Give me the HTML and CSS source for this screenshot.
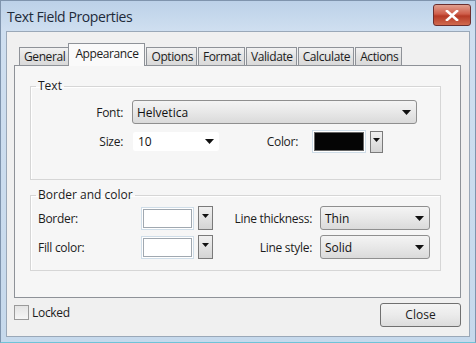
FILE: index.html
```html
<html>
    <head>
        <link rel="stylesheet" href="styles.css">
    </head>
    <body>
        <div class="window">
            <div class="titlebar">
                <span class="title">Text Field Properties</span>
                <div class="close-x">
                    <svg width="14" height="11" viewBox="0 0 14 11"><path d="M2 1 L12 10 M12 1 L2 10" stroke="#fff" stroke-width="2.6" stroke-linecap="square"/></svg>
                </div>
            </div>
            <div class="dialog">
                <div class="tabs">
                    <div class="tab">General</div>
                    <div class="tab selected">Appearance</div>
                    <div class="tab">Options</div>
                    <div class="tab">Format</div>
                    <div class="tab">Validate</div>
                    <div class="tab">Calculate</div>
                    <div class="tab">Actions</div>
                </div>
                <div class="panel">
                    <fieldset class="group group-text">
                        <legend>Text</legend>
                        <div class="row row-font">
                            <span class="label right w92">Font:</span>
                            <div class="select wide">Helvetica<svg class="arrow" width="9" height="5" viewBox="0 0 9 5"><path d="M0 0 H9 L4.5 5 Z" fill="#111"/></svg></div>
                        </div>
                        <div class="row row-size">
                            <span class="label right w92">Size:</span>
                            <div class="select flat size">10<svg class="arrow" width="9" height="5" viewBox="0 0 9 5"><path d="M0 0 H9 L4.5 5 Z" fill="#111"/></svg></div>
                            <span class="label right w78">Color:</span>
                            <div class="swatch black"><div class="fill"></div></div>
                            <div class="drop-btn small"><svg width="7" height="4" viewBox="0 0 7 4"><path d="M0 0 H7 L3.5 4 Z" fill="#111"/></svg></div>
                        </div>
                    </fieldset>
                    <fieldset class="group group-border">
                        <legend>Border and color</legend>
                        <div class="row">
                            <span class="label w110">Border:</span>
                            <div class="swatch"><div class="fill"></div></div>
                            <div class="drop-btn"><svg width="7" height="4" viewBox="0 0 7 4"><path d="M0 0 H7 L3.5 4 Z" fill="#111"/></svg></div>
                            <span class="label right w99">Line thickness:</span>
                            <div class="select line">Thin<svg class="arrow" width="9" height="5" viewBox="0 0 9 5"><path d="M0 0 H9 L4.5 5 Z" fill="#111"/></svg></div>
                        </div>
                        <div class="row">
                            <span class="label w110">Fill color:</span>
                            <div class="swatch"><div class="fill"></div></div>
                            <div class="drop-btn"><svg width="7" height="4" viewBox="0 0 7 4"><path d="M0 0 H7 L3.5 4 Z" fill="#111"/></svg></div>
                            <span class="label right w99">Line style:</span>
                            <div class="select line">Solid<svg class="arrow" width="9" height="5" viewBox="0 0 9 5"><path d="M0 0 H9 L4.5 5 Z" fill="#111"/></svg></div>
                        </div>
                    </fieldset>
                </div>
                <div class="footer">
                    <label class="locked"><span class="checkbox"></span>Locked</label>
                    <div class="button">Close</div>
                </div>
            </div>
        </div>
    </body>
</html>
```

FILE: styles.css
```css
body {
    margin: 0;
    font-family: "Open Sans", "DejaVu Sans", sans-serif;
    font-size: 12px;
    color: #1c1c1c;
}

.window {
    width: 476px;
    height: 343px;
    box-sizing: border-box;
    background: linear-gradient(#bcd1e8, #cfdff0 30px, #c6d9ec);
    border: 1px solid #7f94ad;
    border-bottom-color: #6fc3d8;
    display: flex;
    flex-direction: column;
}

.titlebar {
    height: 30px;
    display: flex;
    justify-content: space-between;
    align-items: flex-start;
    padding: 0 4px 0 6px;
}

.title {
    font-size: 14px;
    color: #1e2a3a;
    margin-top: 6px;
    letter-spacing: -0.4px;
}

.close-x {
    margin-top: 3px;
    width: 36px;
    height: 20px;
    border: 1px solid #6b2f2f;
    border-radius: 3px;
    background: linear-gradient(#e1a08f, #cf5d4a 45%, #b63a26 55%, #d06a4f);
    display: flex;
    align-items: center;
    justify-content: center;
}

.dialog {
    flex: 1;
    margin: 0 5px 5px 5px;
    background: #f0f0f0;
    border: 1px solid #9aa8b8;
    padding: 10px 8px 0 7px;
    display: flex;
    flex-direction: column;
}

.tabs {
    display: flex;
    align-items: flex-end;
    padding-left: 5px;
    height: 23px;
}

.tab {
    height: 17px;
    line-height: 17px;
    padding: 0 3px 0 4px;
    margin-right: 1px;
    border: 1px solid #8e9298;
    border-bottom: none;
    background: linear-gradient(#f2f2f2, #e3e3e3 50%, #d9d9d9);
    letter-spacing: -0.4px;
}

.tab.selected {
    height: 22px;
    line-height: 19px;
    padding: 0 6px;
    margin: 0 1px 0 -2px;
    background: #fafafa;
    position: relative;
    top: 1px;
}

.panel {
    box-sizing: border-box;
    height: 233px;
    background: #f6f6f6;
    border: 1px solid #8e9298;
    padding: 13px 19px 0 15px;
}

.group {
    margin: 0;
    border: 1px solid #d6d6d6;
    box-shadow: inset 1px 1px 0 #fff;
    padding: 0;
    box-sizing: border-box;
}

.group legend {
    padding: 0 2px;
    margin-left: 5px;
    line-height: 14px;
}

.group-text {
    height: 101px;
}

.group-border {
    margin-top: 8px;
    height: 83px;
}

.row {
    display: flex;
    align-items: center;
}

.label {
    letter-spacing: -0.3px;
    flex-shrink: 0;
}

.right {
    text-align: right;
}

.w92 { width: 92px; }
.w78 { width: 78px; }
.w110 { width: 110px; padding-left: 7px; box-sizing: border-box; }
.w99 { width: 99px; margin-right: 8px; }

.row-font {
    margin-top: 7px;
}

.row-font .select {
    margin-left: 9px;
}

.row-size {
    margin-top: 6px;
}

.row-size .size {
    margin-left: 9px;
}

.select {
    box-sizing: border-box;
    height: 24px;
    border: 1px solid #8f8f8f;
    border-radius: 3px;
    background: linear-gradient(#f4f4f4, #e8e8e8 50%, #dadada);
    display: flex;
    align-items: center;
    justify-content: space-between;
    padding: 0 5px 0 4px;
    color: #111;
}

.select.wide {
    width: 285px;
}

.select.flat {
    border-color: #f6f6f6;
    background: #fff;
    height: 21px;
    width: 88px;
    padding-left: 5px;
}

.select.line {
    width: 110px;
    height: 24px;
}

.group-border .row:first-of-type {
    margin-top: 4px;
}

.group-border .row + .row {
    margin-top: 5px;
}

.swatch {
    box-sizing: border-box;
    width: 53px;
    height: 23px;
    border: 1px solid #cfdde8;
    padding: 1px;
    background: #fff;
}

.swatch .fill {
    height: 100%;
    border: 1px solid #a0a8b0;
    box-sizing: border-box;
    background: #fff;
}

.swatch.black {
    width: 54px;
    margin-left: 14px;
}

.swatch.black .fill {
    background: #050505;
    border-color: #666;
}

.drop-btn {
    box-sizing: border-box;
    width: 15px;
    height: 24px;
    margin-left: 4px;
    border: 1px solid #7a7a7a;
    background: linear-gradient(#f0f0f0, #d4d4d4);
    display: flex;
    align-items: center;
    justify-content: center;
    padding-bottom: 4px;
    flex-shrink: 0;
}

.drop-btn.small {
    width: 13px;
    height: 22px;
}

.footer {
    display: flex;
    justify-content: space-between;
    align-items: flex-start;
    padding-top: 5px;
}

.locked {
    display: flex;
    align-items: center;
    margin-top: 1px;
    letter-spacing: -0.3px;
}

.checkbox {
    width: 13px;
    height: 13px;
    border: 1px solid #9a9a9a;
    background: linear-gradient(#e4e4e4, #f6f6f6);
    margin-right: 3px;
}

.button {
    width: 81px;
    height: 24px;
    box-sizing: border-box;
    border: 1px solid #707070;
    border-radius: 3px;
    background: linear-gradient(#f4f4f4, #ebebeb 50%, #dcdcdc);
    text-align: center;
    line-height: 22px;
}
```
